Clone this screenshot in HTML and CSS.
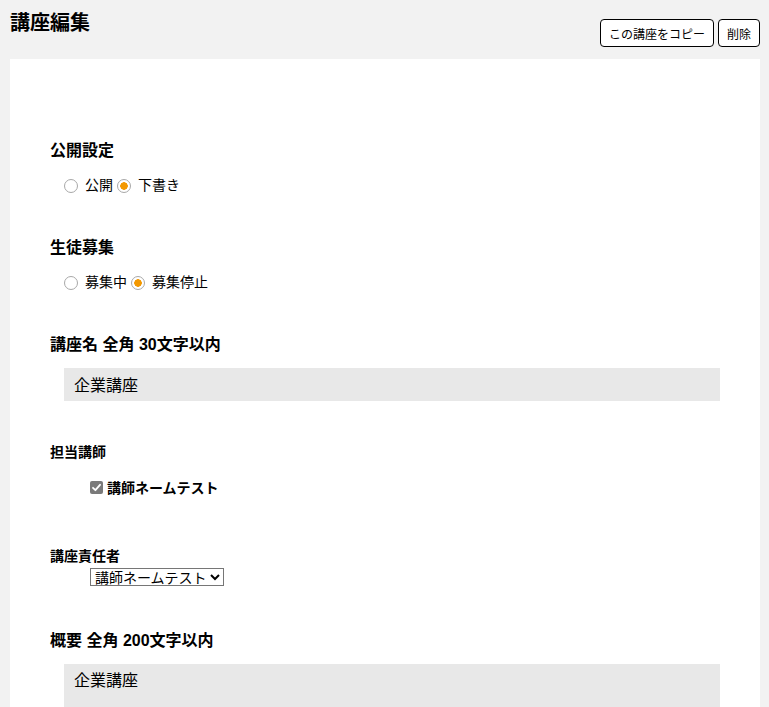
FILE: index.html
```html
<!DOCTYPE html>
<html lang="ja">
<head>
<meta charset="utf-8">
<title>講座編集</title>
<link rel="stylesheet" href="styles.css">
</head>
<body>
<div class="page">
  <header class="head">
    <h1 class="title">講座編集</h1>
    <div class="actions">
      <button class="btn">この講座をコピー</button>
      <button class="btn">削除</button>
    </div>
  </header>
  <main class="panel">
    <section class="field">
      <h2 class="label">公開設定</h2>
      <div class="radios">
        <label class="radio"><input type="radio" name="pub">公開</label>
        <label class="radio"><input type="radio" name="pub" checked>下書き</label>
      </div>
    </section>
    <section class="field">
      <h2 class="label">生徒募集</h2>
      <div class="radios">
        <label class="radio"><input type="radio" name="rec">募集中</label>
        <label class="radio"><input type="radio" name="rec" checked>募集停止</label>
      </div>
    </section>
    <section class="field">
      <h2 class="label">講座名 全角 30文字以内</h2>
      <input class="text" type="text" value="企業講座">
    </section>
    <section class="field">
      <h3 class="sublabel">担当講師</h3>
      <label class="check"><span class="box"><svg viewBox="0 0 13 13" width="13" height="13"><rect x="0" y="0" width="13" height="13" rx="2" fill="#7a7a7a"/><path d="M3 6.8 L5.4 9.2 L10 3.8" fill="none" stroke="#fff" stroke-width="1.8" stroke-linecap="round" stroke-linejoin="round"/></svg></span>講師ネームテスト</label>
    </section>
    <section class="field">
      <h3 class="sublabel">講座責任者</h3>
      <select class="sel"><option>講師ネームテスト</option></select>
    </section>
    <section class="field">
      <h2 class="label">概要 全角 200文字以内</h2>
      <textarea class="area">企業講座</textarea>
    </section>
  </main>
</div>
</body>
</html>
```
FILE: styles.css
```css
html, body {
  margin: 0;
  padding: 0;
  background: #f2f2f2;
  font-family: "Liberation Sans", "Noto Sans CJK JP", sans-serif;
  color: #000;
}
.page {
  padding: 0 9px 0 10px;
}
.head {
  display: flex;
  justify-content: space-between;
  align-items: flex-start;
  height: 59px;
}
.title {
  margin: 8px 0 0;
  font-size: 20px;
  font-weight: 700;
  line-height: 30px;
}
.actions {
  display: flex;
  gap: 4px;
  margin-top: 19px;
}
.btn {
  height: 28px;
  padding: 0 8px;
  border: 1px solid #000;
  border-radius: 4px;
  background: #fff;
  font-family: inherit;
  font-size: 12px;
  color: #000;
}
.panel {
  background: #fff;
  padding: 81px 40px 40px 40px;
  min-height: 700px;
}
.label {
  margin: 0;
  font-size: 16px;
  font-weight: 700;
  line-height: 22px;
}
.radios {
  display: flex;
  gap: 4px;
  margin: 13px 0 42px 14px;
  font-size: 14px;
  line-height: 20px;
}
.radio {
  display: flex;
  align-items: center;
}
.radio input {
  appearance: none;
  -webkit-appearance: none;
  box-sizing: border-box;
  width: 14px;
  height: 14px;
  margin: 2px 7px 0 0;
  border: 1px solid #a8a8a8;
  border-radius: 50%;
  background: #fff;
}
.radio input:checked {
  background: radial-gradient(circle, #f39800 0 3.5px, #fff 4px);
}
.text {
  display: block;
  box-sizing: border-box;
  width: 656px;
  height: 33px;
  margin: 12px 0 41px 14px;
  padding: 0 10px 2px;
  border: none;
  background: #e8e8e8;
  font-family: inherit;
  font-size: 16px;
  color: #000;
}
.sublabel {
  margin: 0;
  font-size: 14px;
  font-weight: 700;
  line-height: 20px;
}
.check {
  display: flex;
  align-items: center;
  margin: 16px 0 48px 40px;
  font-size: 14px;
  font-weight: 700;
  line-height: 20px;
}
.box {
  display: flex;
  margin: -2px 4px 0 0;
}
.sel {
  display: block;
  margin: 2px 0 44px 40px;
  height: 18px;
  font-family: inherit;
  font-size: 14px;
  padding: 0;
  border: 1px solid #767676;
  border-radius: 0;
  background: #fff;
  color: #000;
}
.area {
  display: block;
  box-sizing: border-box;
  width: 656px;
  height: 80px;
  margin: 12px 0 0 14px;
  padding: 3px 10px;
  border: none;
  background: #e8e8e8;
  font-family: inherit;
  font-size: 16px;
  color: #000;
  resize: none;
}
```
